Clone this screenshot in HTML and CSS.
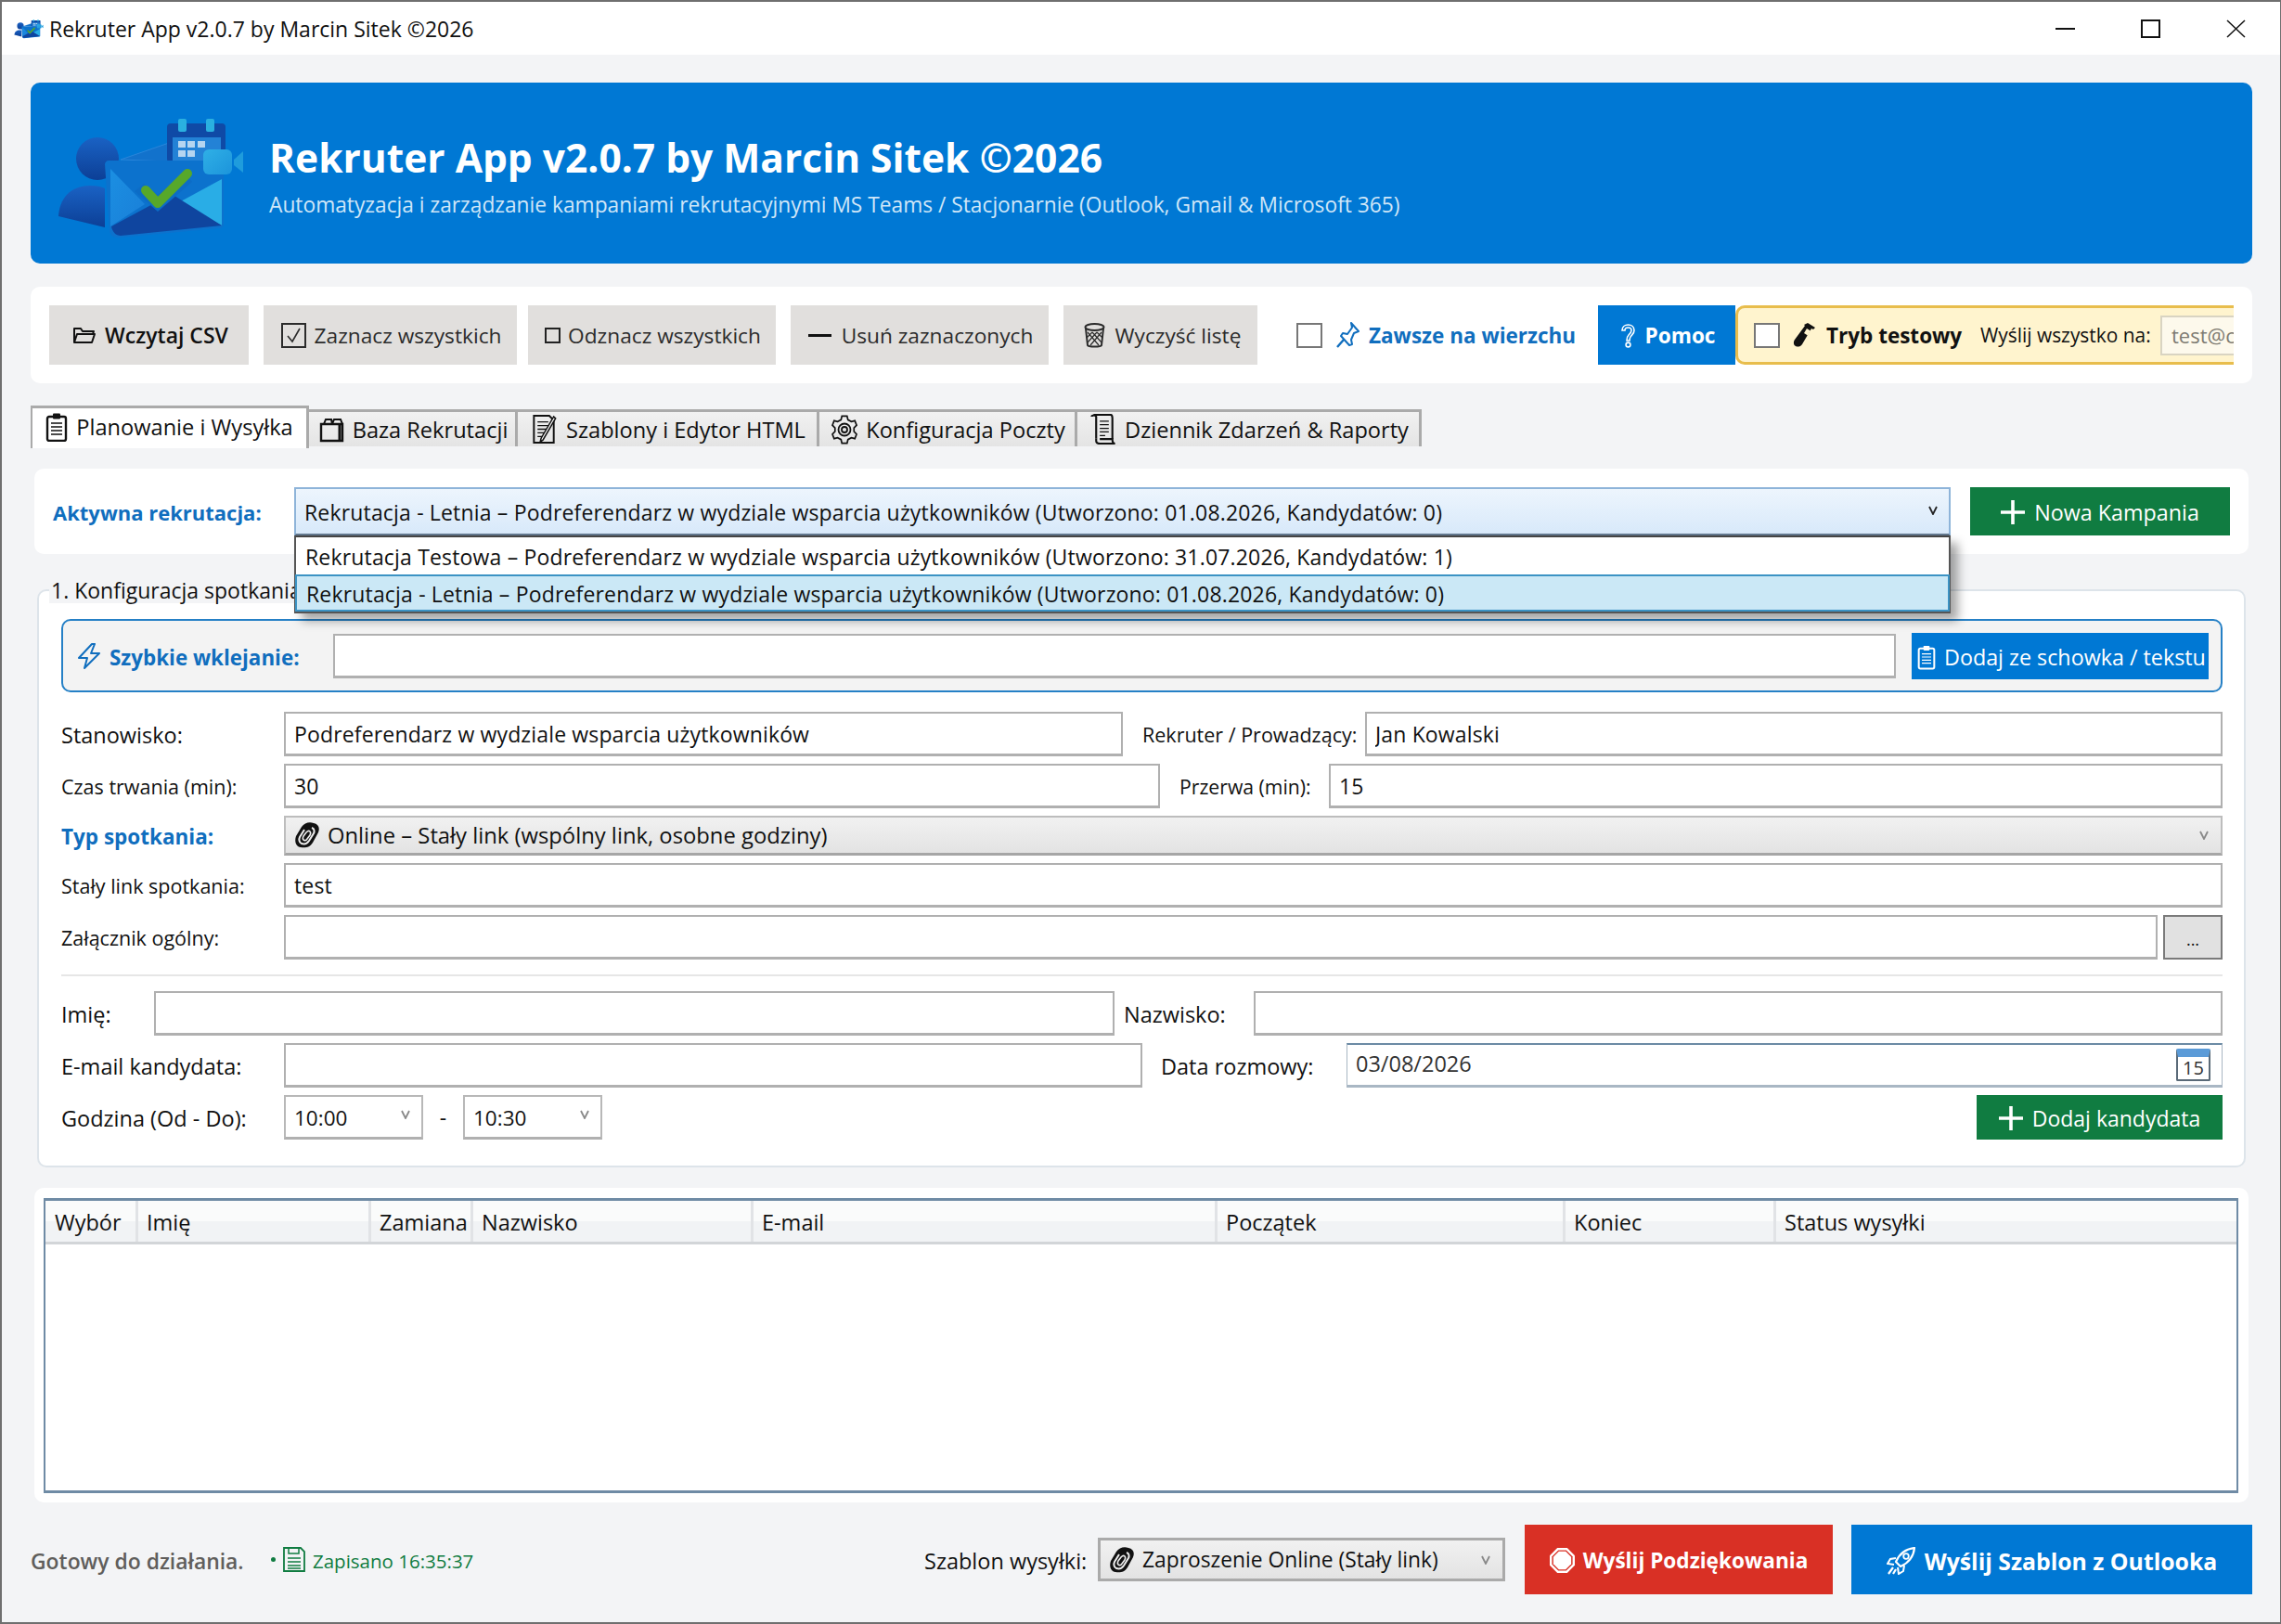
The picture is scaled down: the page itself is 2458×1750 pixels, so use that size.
FILE: index.html
```html
<!DOCTYPE html>
<html lang="pl">
<head>
    <meta charset="UTF-8">
    <title>Rekruter App v2.0.7 by Marcin Sitek ©2026</title>
    <link rel="stylesheet" href="styles.css">
</head>
<body>

<!-- zestaw ikon -->
<svg class="icon-defs" xmlns="http://www.w3.org/2000/svg">
    <defs>
        <linearGradient id="gPerson" x1="0" y1="0" x2="0" y2="1">
            <stop offset="0" stop-color="#1a62c4"/>
            <stop offset="1" stop-color="#0c3f96"/>
        </linearGradient>
        <linearGradient id="gFlap" x1="0" y1="0" x2="1" y2="1">
            <stop offset="0" stop-color="#1b8fe2"/>
            <stop offset="1" stop-color="#1a7fd8"/>
        </linearGradient>
        <linearGradient id="gCam" x1="0" y1="0" x2="1" y2="1">
            <stop offset="0" stop-color="#2fb0e6"/>
            <stop offset="1" stop-color="#1c94db"/>
        </linearGradient>
    </defs>
    <symbol id="i-logo" viewBox="20 15 205 132">
        <circle cx="65" cy="61" r="23" fill="url(#gPerson)"/>
        <path d="M23 123c1-18 12-33 34-33 7 0 12 1 16 3v42z" fill="url(#gPerson)"/>
        <path d="M90 62l52-18v20z" fill="#1272cc" stroke="#2a86da" stroke-width="1"/>
        <rect x="140" y="23" width="63" height="42" rx="4" fill="#0f4aa6"/>
        <rect x="146" y="38" width="52" height="26" fill="#2382d6"/>
        <rect x="152" y="18" width="9" height="14" rx="2" fill="#2ab0e0"/>
        <rect x="182" y="18" width="9" height="14" rx="2" fill="#2ab0e0"/>
        <g fill="#b5d5f0">
            <rect x="152" y="42" width="8" height="7"/>
            <rect x="162" y="42" width="8" height="7"/>
            <rect x="173" y="42" width="8" height="7"/>
            <rect x="152" y="52" width="8" height="7"/>
            <rect x="162" y="52" width="8" height="7"/>
        </g>
        <path d="M77 63h118c4 0 6 2 6 6v62c0 3-2 5-5 5L88 146c-5 0-9-2-10-7L73 67c0-2 2-4 4-4z" fill="#0c72cd"/>
        <path d="M79 72l37 38-37 24z" fill="url(#gFlap)"/>
        <path d="M199 83v50l-46-25z" fill="#29ade6"/>
        <path d="M80 134l50-27 18-6 51 32-109 11c-5 0-9-4-10-10z" fill="#0f459f"/>
        <path d="M105 96l25 22 37-32-8-10-29 24-15-12z" fill="#0c6cc6"/>
        <path d="M117 95l13 14 32-32" fill="none" stroke="#57a82a" stroke-width="10" stroke-linecap="round" stroke-linejoin="round"/>
        <rect x="179" y="51" width="31" height="27" rx="6" fill="url(#gCam)"/>
        <path d="M212 62l10-9v23l-10-8z" fill="#1f9cdc"/>
    </symbol>
    <symbol id="i-folder" viewBox="0 0 27 20">
        <path d="M3 18V3h7l2 3h12l-1 3M3 18h19l3-9H6z" fill="none" stroke="currentColor" stroke-width="2" stroke-linejoin="round"/>
    </symbol>
    <symbol id="i-check" viewBox="0 0 27 27">
        <rect x="1" y="1" width="25" height="25" fill="none" stroke="currentColor" stroke-width="2"/>
        <path d="M7 14l5 6 8-14" fill="none" stroke="currentColor" stroke-width="1.6"/>
    </symbol>
    <symbol id="i-trash" viewBox="0 0 27 27">
        <ellipse cx="13.5" cy="4.5" rx="10" ry="3.5" fill="none" stroke="currentColor" stroke-width="2"/>
        <path d="M4 6l2 18c1 2 14 2 15 0l2-18" fill="none" stroke="currentColor" stroke-width="2"/>
        <path d="M6 10l12 14M11 10l10 11M16 10l6 6M21 10L9 24M16 10L6 21M11 10l-6 6" stroke="currentColor" stroke-width="1.2" fill="none"/>
    </symbol>
    <symbol id="i-pin" viewBox="0 0 27 28">
        <path d="M17 1l8 9-5 2-3 7 1 5-3 1-9-10 2-3 5 1 5-7z" fill="none" stroke="currentColor" stroke-width="2" stroke-linejoin="round"/>
        <path d="M9 19l-7 8" stroke="currentColor" stroke-width="2.4" fill="none"/>
    </symbol>
    <symbol id="i-help" viewBox="0 0 17 27">
        <path d="M2 8c0-4 3-6 6.5-6S15 4 15 8s-3 5-4 7-1 3-1 4H7c0-3 0-4 2-6s3-3 3-5-1-3-3.500-3S5 6 5 8z" fill="none" stroke="currentColor" stroke-width="1.6"/>
        <circle cx="8.5" cy="23.5" r="2.4" fill="none" stroke="currentColor" stroke-width="1.6"/>
    </symbol>
    <symbol id="i-tube" viewBox="0 0 27 28">
        <path d="M16 1l8 5-2 2-2-1L10 24c-2 3-5 3-7 2s-3-4-1-7L13 4l-1-1z" fill="currentColor"/>
        <path d="M15 7l4 2.5-3 5-4-2.5z" fill="#fff4ce"/>
    </symbol>
    <symbol id="i-clip" viewBox="0 0 24 32">
        <rect x="2" y="5" width="20" height="26" rx="2" fill="none" stroke="currentColor" stroke-width="2.4"/>
        <rect x="8" y="1.5" width="8" height="6" rx="1" fill="currentColor"/>
        <path d="M6 12h12M6 16h12M6 20h12M6 24h12" stroke="currentColor" stroke-width="1.4"/>
    </symbol>
    <symbol id="i-box" viewBox="0 0 27 28">
        <path d="M2 8h23v18H2z" fill="none" stroke="currentColor" stroke-width="2.4"/>
        <path d="M5 8l2-5h6l1 5M14 8l2-5h7l2 5" fill="none" stroke="currentColor" stroke-width="2"/>
        <path d="M22 8v18" stroke="currentColor" stroke-width="3"/>
    </symbol>
    <symbol id="i-memo" viewBox="0 0 28 34">
        <path d="M2 2h17l5 5v25H2z" fill="none" stroke="currentColor" stroke-width="2"/>
        <path d="M6 9h12M6 13h12M6 17h10M6 21h8M6 25h6" stroke="currentColor" stroke-width="1.3"/>
        <path d="M26 5L12 29l-3 2 1-4L24 3z" fill="#fff" stroke="currentColor" stroke-width="1.6"/>
    </symbol>
    <symbol id="i-gear" viewBox="0 0 28 32">
        <path d="M11 1h6l1 4 4 2 4-1 2 5-3 3v4l3 3-2 5-4-1-4 2-1 4h-6l-1-4-4-2-4 1-2-5 3-3v-4L0 11l2-5 4 1 4-2z" fill="none" stroke="currentColor" stroke-width="1.8" transform="translate(1 .5) scale(.93 .97)"/>
        <circle cx="14" cy="16" r="6.5" fill="none" stroke="currentColor" stroke-width="1.8"/>
        <circle cx="14" cy="16" r="3" fill="none" stroke="currentColor" stroke-width="1.8"/>
    </symbol>
    <symbol id="i-scroll" viewBox="0 0 28 34">
        <path d="M1 3c0-2 5-2 5 0v2M3 1h19c2 0 2 2 2 4v23M6 4v23" fill="none" stroke="currentColor" stroke-width="2.2"/>
        <path d="M6 27v3c0 2 2 3 4 3h17c-2 0-3-2-3-5H10" fill="none" stroke="currentColor" stroke-width="2.2"/>
        <path d="M10 8h10M10 12h10M10 16h10M10 20h10M10 24h6" stroke="currentColor" stroke-width="1.3"/>
    </symbol>
    <symbol id="i-plus" viewBox="0 0 26 26">
        <path d="M13 0v26M0 13h26" stroke="currentColor" stroke-width="3.6" fill="none"/>
    </symbol>
    <symbol id="i-bolt" viewBox="0 0 26 28">
        <path d="M16 1L2 16h9l-3 11 16-16h-9l4-10z" fill="none" stroke="currentColor" stroke-width="2" stroke-linejoin="round"/>
    </symbol>
    <symbol id="i-link" viewBox="0 0 30 28">
        <path d="M22 1c5 1 7 5 5 10l-6 11c-3 5-8 6-13 5S1 21 3 15L9 5c3-4 8-6 13-4z" fill="currentColor"/>
        <path d="M20 6c3 1 3 4 2 6l-5 8c-2 3-5 4-8 3s-3-5-2-7l5-8" fill="none" stroke="#eee" stroke-width="2"/>
        <path d="M18 10c1 1 1 2 0 4l-3 4c-1 2-3 2-4 1s-1-2 0-4l3-4c1-1 3-2 4-1z" fill="none" stroke="#eee" stroke-width="1.6"/>
    </symbol>
    <symbol id="i-save" viewBox="0 0 24 27">
        <path d="M1 1h18l4 4v21H1z" fill="none" stroke="currentColor" stroke-width="1.8"/>
        <path d="M6 1v6h11V1M5 12h14M5 16h14M5 20h14M5 23h14" fill="none" stroke="currentColor" stroke-width="1.5"/>
    </symbol>
    <symbol id="i-stop" viewBox="0 0 28 28">
        <path d="M8.5 0h11L28 8.5v11L19.5 28h-11L0 19.5v-11z" fill="#fff"/>
        <path d="M9.5 2.5h9l7 7v9l-7 7h-9l-7-7v-9z" fill="#d93025"/>
        <path d="M10.2 4h7.6L24 10.2v7.6L17.8 24h-7.6L4 17.8v-7.6z" fill="#fff"/>
    </symbol>
    <symbol id="i-rocket" viewBox="0 0 32 30">
        <path d="M30 1C21 2 14 7 10 16l5 5c9-4 14-10 15-20z" fill="none" stroke="currentColor" stroke-width="2.2" stroke-linejoin="round"/>
        <circle cx="21" cy="10" r="2.8" fill="none" stroke="currentColor" stroke-width="1.8"/>
        <path d="M10 12l-6 1-3 5 7 1M19 20l-1 6-5 3-1-7" fill="none" stroke="currentColor" stroke-width="2"/>
        <path d="M7 22l-5 7M10 24l-3 5" stroke="currentColor" stroke-width="2.2"/>
    </symbol>
    <symbol id="i-chev" viewBox="0 0 12 10">
        <path d="M2 1l4 8 4-8" fill="none" stroke="currentColor" stroke-width="1.8"/>
    </symbol>
</svg>

<div class="app-window">

    <!-- pasek tytulu -->
    <div class="title-bar">
        <svg class="title-icon"><use href="#i-logo"/></svg>
        <span class="title-text">Rekruter App v2.0.7 by Marcin Sitek ©2026</span>
        <div class="win-controls">
            <span class="win-min"></span>
            <span class="win-max"></span>
            <svg class="win-close" viewBox="0 0 21 20"><path d="M1 1l19 18M20 1L1 19" stroke="#111" stroke-width="1.5" fill="none"/></svg>
        </div>
    </div>

    <div class="app-content">

        <!-- naglowek -->
        <header class="hero">
            <svg class="hero-logo"><use href="#i-logo"/></svg>
            <div class="hero-text">
                <h1 class="hero-title">Rekruter App v2.0.7 by Marcin Sitek ©2026</h1>
                <p class="hero-sub">Automatyzacja i zarządzanie kampaniami rekrutacyjnymi MS Teams / Stacjonarnie (Outlook, Gmail &amp; Microsoft 365)</p>
            </div>
        </header>

        <!-- pasek narzedzi -->
        <div class="toolbar panel">
            <button class="tool-btn tool-strong btn-csv"><svg class="ico ico-folder"><use href="#i-folder"/></svg>Wczytaj CSV</button>
            <button class="tool-btn btn-all"><svg class="ico ico-27"><use href="#i-check"/></svg>Zaznacz wszystkich</button>
            <button class="tool-btn btn-none"><span class="mini-square"></span>Odznacz wszystkich</button>
            <button class="tool-btn btn-del"><span class="minus-bar"></span>Usuń zaznaczonych</button>
            <button class="tool-btn btn-clear"><svg class="ico ico-27"><use href="#i-trash"/></svg>Wyczyść listę</button>

            <span class="check-box top-check"></span>
            <svg class="ico ico-pin"><use href="#i-pin"/></svg>
            <span class="always-top">Zawsze na wierzchu</span>

            <button class="help-btn"><svg class="ico ico-help"><use href="#i-help"/></svg>Pomoc</button>

            <div class="test-mode">
                <span class="check-box"></span>
                <svg class="ico ico-tube"><use href="#i-tube"/></svg>
                <span class="test-label">Tryb testowy</span>
                <span class="test-send">Wyślij wszystko na:</span>
                <span class="test-input">test@company.pl</span>
            </div>
        </div>

        <!-- zakladki -->
        <nav class="tabs">
            <div class="tab tab-active tab-plan"><svg class="ico ico-clip"><use href="#i-clip"/></svg>Planowanie i Wysyłka</div>
            <div class="tab tab-base"><svg class="ico ico-box"><use href="#i-box"/></svg>Baza Rekrutacji</div>
            <div class="tab tab-tpl"><svg class="ico ico-memo"><use href="#i-memo"/></svg>Szablony i Edytor HTML</div>
            <div class="tab tab-conf"><svg class="ico ico-gear"><use href="#i-gear"/></svg>Konfiguracja Poczty</div>
            <div class="tab tab-log"><svg class="ico ico-scroll"><use href="#i-scroll"/></svg>Dziennik Zdarzeń &amp; Raporty</div>
        </nav>

        <!-- aktywna rekrutacja -->
        <div class="campaign panel">
            <span class="campaign-label">Aktywna rekrutacja:</span>
            <div class="campaign-combo">
                <span>Rekrutacja - Letnia – Podreferendarz w wydziale wsparcia użytkowników (Utworzono: 01.08.2026, Kandydatów: 0)</span>
                <svg class="chev chev-dark"><use href="#i-chev"/></svg>
                <ul class="campaign-list">
                    <li>Rekrutacja Testowa – Podreferendarz w wydziale wsparcia użytkowników (Utworzono: 31.07.2026, Kandydatów: 1)</li>
                    <li class="is-selected">Rekrutacja - Letnia – Podreferendarz w wydziale wsparcia użytkowników (Utworzono: 01.08.2026, Kandydatów: 0)</li>
                </ul>
            </div>
            <button class="green-btn btn-campaign"><svg class="ico ico-plus"><use href="#i-plus"/></svg>Nowa Kampania</button>
        </div>

        <!-- konfiguracja spotkania -->
        <section class="config-group">
            <span class="group-title">1. Konfiguracja spotkania</span>

            <div class="quick-paste">
                <svg class="ico ico-bolt"><use href="#i-bolt"/></svg>
                <span class="quick-label">Szybkie wklejanie:</span>
                <input class="field quick-input" type="text">
                <button class="quick-btn"><svg class="ico ico-quick"><use href="#i-clip"/></svg>Dodaj ze schowka / tekstu</button>
            </div>

            <div class="form-row">
                <label class="lbl lbl-main">Stanowisko:</label>
                <input class="field inp-position" type="text" value="Podreferendarz w wydziale wsparcia użytkowników">
                <label class="lbl lbl-small lbl-recruiter">Rekruter / Prowadzący:</label>
                <input class="field grow" type="text" value="Jan Kowalski">
            </div>
            <div class="form-row">
                <label class="lbl lbl-small lbl-main">Czas trwania (min):</label>
                <input class="field inp-duration" type="text" value="30">
                <label class="lbl lbl-break">Przerwa (min):</label>
                <input class="field grow" type="text" value="15">
            </div>
            <div class="form-row row-type">
                <label class="lbl lbl-main lbl-blue">Typ spotkania:</label>
                <div class="combo grow">
                    <svg class="ico ico-link"><use href="#i-link"/></svg>
                    <span>Online – Stały link (wspólny link, osobne godziny)</span>
                    <svg class="chev"><use href="#i-chev"/></svg>
                </div>
            </div>
            <div class="form-row">
                <label class="lbl lbl-small lbl-main">Stały link spotkania:</label>
                <input class="field grow" type="text" value="test">
            </div>
            <div class="form-row">
                <label class="lbl lbl-small lbl-main">Załącznik ogólny:</label>
                <input class="field grow" type="text">
                <button class="browse-btn">...</button>
            </div>

            <div class="divider"></div>

            <div class="form-row">
                <label class="lbl lbl-first">Imię:</label>
                <input class="field inp-first" type="text">
                <label class="lbl lbl-last">Nazwisko:</label>
                <input class="field grow" type="text">
            </div>
            <div class="form-row">
                <label class="lbl lbl-main">E-mail kandydata:</label>
                <input class="field inp-email" type="text">
                <label class="lbl lbl-date">Data rozmowy:</label>
                <div class="date-field grow">
                    <span>03/08/2026</span>
                    <div class="cal-icon"><span>15</span></div>
                </div>
            </div>
            <div class="form-row row-last">
                <label class="lbl lbl-main">Godzina (Od - Do):</label>
                <div class="time-combo"><span>10:00</span><svg class="chev"><use href="#i-chev"/></svg></div>
                <span class="time-dash">-</span>
                <div class="time-combo"><span>10:30</span><svg class="chev"><use href="#i-chev"/></svg></div>
                <button class="green-btn btn-add"><svg class="ico ico-plus"><use href="#i-plus"/></svg>Dodaj kandydata</button>
            </div>
        </section>

        <!-- tabela kandydatow -->
        <div class="table-panel panel">
            <div class="grid-table">
                <div class="grid-head">
                    <div class="th">Wybór</div>
                    <div class="th">Imię</div>
                    <div class="th">Zamiana</div>
                    <div class="th">Nazwisko</div>
                    <div class="th">E-mail</div>
                    <div class="th">Początek</div>
                    <div class="th">Koniec</div>
                    <div class="th">Status wysyłki</div>
                </div>
            </div>
        </div>

        <!-- stopka -->
        <footer class="bottom-bar">
            <span class="status-text">Gotowy do działania.</span>
            <span class="status-dot"></span>
            <svg class="ico ico-save"><use href="#i-save"/></svg>
            <span class="status-saved">Zapisano 16:35:37</span>
            <span class="bottom-label">Szablon wysyłki:</span>
            <div class="combo send-combo">
                <svg class="ico ico-link"><use href="#i-link"/></svg>
                <span>Zaproszenie Online (Stały link)</span>
                <svg class="chev"><use href="#i-chev"/></svg>
            </div>
            <button class="send-btn send-red"><svg class="ico ico-27"><use href="#i-stop"/></svg>Wyślij Podziękowania</button>
            <button class="send-btn send-blue"><svg class="ico ico-rocket"><use href="#i-rocket"/></svg>Wyślij Szablon z Outlooka</button>
        </footer>
    </div>
</div>

</body>
</html>
```

FILE: styles.css
```css
* {
    margin: 0;
    padding: 0;
    box-sizing: border-box;
}

body {
    font-family: "Open Sans", "Noto Sans", "Liberation Sans", sans-serif;
    font-size: 23px;
    color: #111;
    background: #f3f4f6;
    overflow: hidden;
}

button,
input {
    font: inherit;
    color: inherit;
    border-radius: 0;
}

button {
    border: none;
}

.icon-defs {
    position: absolute;
    width: 0;
    height: 0;
}

.ico {
    flex: none;
    display: block;
}

.ico-27 { width: 27px; height: 27px; }

/* okno */
.app-window {
    width: 2458px;
    height: 1750px;
    border: 2px solid #6f6f6f;
    border-right-width: 1px;
    display: flex;
    flex-direction: column;
    background: #f3f4f6;
}

.title-bar {
    height: 57px;
    flex: none;
    background: #fff;
    display: flex;
    align-items: center;
    padding: 0 37px 0 13px;
}

.title-icon {
    width: 32px;
    height: 22px;
    margin-right: 6px;
}

.title-text {
    font-size: 23px;
}

.win-controls {
    margin-left: auto;
    display: flex;
    align-items: center;
    gap: 71px;
}

.win-min {
    width: 21px;
    height: 2px;
    background: #111;
}

.win-max {
    width: 21px;
    height: 20px;
    border: 2px solid #111;
}

.win-close {
    width: 21px;
    height: 20px;
}

.app-content {
    flex: 1;
    padding: 30px 30px 0 31px;
}

.panel {
    background: #fff;
    border-radius: 10px;
}

/* naglowek */
.hero {
    height: 195px;
    background: #0078d4;
    border-radius: 10px;
    display: flex;
    align-items: center;
    padding-left: 27px;
    color: #fff;
}

.hero-logo {
    width: 205px;
    height: 132px;
    margin: 9px 25px 0 0;
}

.hero-text {
    margin-top: 6px;
    white-space: nowrap;
}

.hero-title {
    font-size: 42.5px;
    font-weight: 700;
    line-height: 52px;
}

.hero-sub {
    font-size: 22.75px;
    line-height: 30px;
    margin-top: 10px;
    color: #cfe6f8;
}

/* pasek narzedzi */
.toolbar {
    height: 104px;
    margin-top: 25px;
    padding: 20px;
    display: flex;
    align-items: center;
}

.tool-btn {
    height: 64px;
    flex: none;
    background: #e1dfdd;
    color: #2b2b2b;
    display: flex;
    align-items: center;
    justify-content: center;
    gap: 9px;
    margin-right: 16px;
    padding-left: 2px;
    white-space: nowrap;
    font-size: 22.7px;
}

.tool-strong {
    font-weight: 600;
    font-size: 23px;
    color: #111;
}

.btn-csv { width: 215px; }
.btn-all { width: 273px; margin-right: 12px; }
.btn-none { width: 267px; gap: 8px; }
.btn-del { width: 278px; gap: 11px; }
.btn-clear { width: 209px; margin-right: 42px; }

.ico-folder { width: 27px; height: 20px; }

.mini-square {
    width: 17px;
    height: 17px;
    border: 2px solid #222;
    flex: none;
}

.minus-bar {
    width: 25px;
    height: 3px;
    background: #111;
    flex: none;
}

.check-box {
    width: 28px;
    height: 27px;
    flex: none;
    background: #fff;
    border: 2px solid #777;
}

.ico-pin {
    width: 27px;
    height: 28px;
    color: #106ebe;
    margin: 0 9px 0 14px;
}

.always-top {
    color: #106ebe;
    font-weight: 700;
    font-size: 22.5px;
    white-space: nowrap;
    width: 247px;
}

.help-btn {
    width: 148px;
    height: 64px;
    flex: none;
    background: #0078d4;
    color: #fff;
    font-weight: 700;
    font-size: 22.6px;
    display: flex;
    align-items: center;
    justify-content: center;
    gap: 10px;
    padding-left: 2px;
}

.ico-help { width: 17px; height: 27px; }

.test-mode {
    flex: 1;
    min-width: 0;
    height: 64px;
    background: #fff4ce;
    border: 3px solid #e8bd4c;
    border-right: none;
    border-radius: 10px 0 0 10px;
    display: flex;
    align-items: center;
    padding-left: 17px;
    overflow: hidden;
    white-space: nowrap;
}

.ico-tube {
    width: 27px;
    height: 28px;
    margin: 0 9px 0 14px;
}

.test-label {
    flex: none;
    font-weight: 700;
    font-size: 22.5px;
    width: 166px;
}

.test-send {
    flex: none;
    font-size: 20.9px;
    width: 194px;
}

.test-input {
    flex: none;
    width: 180px;
    height: 43px;
    line-height: 38px;
    padding-left: 10px;
    background: #fdf9ec;
    border: 2px solid #d9d4c2;
    color: #7d7b72;
    font-size: 22px;
}

/* zakladki */
.tabs {
    display: flex;
    align-items: flex-start;
    height: 46px;
    margin-top: 24px;
}

.tab {
    height: 40px;
    margin-top: 4px;
    flex: none;
    display: flex;
    align-items: center;
    justify-content: center;
    gap: 9px;
    padding-left: 3px;
    background: linear-gradient(#f1f1f1, #e4e4e4);
    border: 3px solid #aaa;
    border-bottom: none;
    border-left: none;
    white-space: nowrap;
    font-size: 23.6px;
}

.tab-active {
    height: 46px;
    margin-top: 0;
    background: #fff;
    border-left: 2px solid #aaa;
    padding-left: 0;
    padding-bottom: 4px;
}

.tab-plan { width: 300px; }
.tab-base { width: 225px; }
.tab-tpl { width: 325px; }
.tab-conf { width: 278px; }
.tab-log { width: 371px; }

.ico-clip { width: 24px; height: 32px; }
.ico-box { width: 27px; height: 28px; }
.ico-memo { width: 28px; height: 33px; }
.ico-gear { width: 28px; height: 32px; }
.ico-scroll { width: 28px; height: 33px; }

/* aktywna rekrutacja */
.campaign {
    height: 92px;
    margin: 22px 4px 0;
    padding: 20px;
    display: flex;
    align-items: flex-start;
}

.campaign-label {
    width: 260px;
    line-height: 54px;
    color: #106ebe;
    font-weight: 700;
    font-size: 22px;
    white-space: nowrap;
}

.campaign-combo {
    position: relative;
    width: 1785px;
    height: 53px;
    display: flex;
    align-items: center;
    padding: 2px 0 0 9px;
    background: linear-gradient(#edf5fd, #d8e9fa);
    border: 2px solid #8eb4d9;
    border-bottom: 3px solid #64798f;
    white-space: nowrap;
    letter-spacing: 0.17px;
}

.chev {
    width: 12px;
    height: 10px;
    margin-left: auto;
    color: #888;
    flex: none;
}

.campaign-combo .chev {
    margin: -4px 11px 0 auto;
}

.chev-dark {
    color: #222;
}

.campaign-list {
    position: absolute;
    left: -2px;
    top: 50px;
    width: 1785px;
    height: 84px;
    list-style: none;
    background: #fff;
    border: 2px solid #555;
    border-top-color: #444;
    box-shadow: 8px 8px 10px rgba(0, 0, 0, 0.35);
    z-index: 5;
}

.campaign-list li {
    height: 40px;
    line-height: 42px;
    padding-left: 10px;
}

.campaign-list .is-selected {
    line-height: 38px;
    background: #cbe8f6;
    border: 2px solid #3c93c4;
    margin-left: -1px;
    margin-right: -1px;
}

.green-btn {
    background: #107c41;
    color: #fff;
    display: flex;
    align-items: center;
    justify-content: center;
    gap: 10px;
    white-space: nowrap;
    font-weight: 500;
}

.btn-campaign {
    width: 280px;
    height: 52px;
    margin-left: 21px;
    padding-top: 1px;
    font-size: 23.3px;
}

.ico-plus { width: 26px; height: 26px; }

/* konfiguracja spotkania */
.config-group {
    position: relative;
    height: 623px;
    margin: 38px 7px 0;
    padding: 30px 23px 0 24px;
    background: #fff;
    border: 2px solid #dde4ea;
    border-radius: 10px;
}

.group-title {
    position: absolute;
    left: 11px;
    top: -15px;
    padding: 0 2px;
    line-height: 28px;
    background: #f3f4f6;
    white-space: nowrap;
}

.quick-paste {
    height: 79px;
    display: flex;
    align-items: center;
    padding: 0 13px 0 15px;
    margin-bottom: 21px;
    background: #f3f3f3;
    border: 2px solid #2580c6;
    border-radius: 10px;
}

.ico-bolt {
    width: 26px;
    height: 28px;
    color: #106ebe;
    margin-right: 9px;
}

.quick-label {
    width: 241px;
    padding-top: 3px;
    color: #106ebe;
    font-weight: 700;
    font-size: 22.4px;
    white-space: nowrap;
}

.field {
    height: 48px;
    padding: 0 9px;
    background: #fff;
    border: 2px solid #b0b0b0;
    border-bottom-width: 3px;
    outline: none;
    min-width: 0;
    letter-spacing: 0.15px;
}

.quick-input {
    flex: 1;
}

.quick-btn {
    width: 320px;
    height: 50px;
    flex: none;
    margin-left: 17px;
    background: #0078d4;
    color: #fff;
    display: flex;
    align-items: center;
    padding: 2px 0 0 6px;
    gap: 9px;
    white-space: nowrap;
    overflow: hidden;
    font-weight: 500;
    font-size: 23.3px;
}

.ico-quick {
    width: 20px;
    height: 28px;
}

.form-row {
    display: flex;
    align-items: center;
    height: 48px;
    margin-bottom: 8px;
}

.row-type {
    height: 43px;
}

.row-last {
    margin-bottom: 0;
}

.grow {
    flex: 1;
}

.lbl {
    flex: none;
    padding-top: 1px;
    white-space: nowrap;
    font-size: 23.5px;
}

.lbl-small {
    font-size: 21.5px;
}

.lbl-main { width: 240px; }
.lbl-blue { color: #106ebe; font-weight: 700; font-size: 22.5px; }
.inp-position { width: 904px; }
.lbl-recruiter { width: 240px; margin-left: 21px; }
.inp-duration { width: 944px; }
.lbl-break { width: 161px; margin-left: 21px; font-size: 21.2px; }
.lbl-first { width: 100px; }
.inp-first { width: 1035px; }
.lbl-last { width: 140px; margin-left: 10px; }
.inp-email { width: 925px; }
.lbl-date { width: 200px; margin-left: 20px; }

.combo {
    height: 100%;
    display: flex;
    align-items: center;
    padding: 0 12px 0 8px;
    gap: 7px;
    background: linear-gradient(#f1f1f1, #e3e3e3);
    border: 2px solid #bdbdbd;
    border-bottom: 3px solid #a6a6a6;
    white-space: nowrap;
    font-size: 23.8px;
}

.ico-link {
    width: 30px;
    height: 28px;
}

.browse-btn {
    width: 64px;
    height: 48px;
    flex: none;
    margin-left: 6px;
    background: #e1e1e1;
    border: 2px solid #7a7a7a;
    line-height: 44px;
    padding-top: 2px;
    font-size: 18px;
}

.divider {
    height: 2px;
    margin: 16px 0;
    background: #e6e6e6;
}

.date-field {
    height: 48px;
    display: flex;
    align-items: center;
    justify-content: space-between;
    padding: 0 12px 4px 9px;
    background: #fff;
    border: 1px solid #a9b7c4;
    border-top: 2px solid #6b8aa5;
    border-bottom: 3px solid #a9b7c4;
    color: #333;
    font-size: 23.5px;
}

.cal-icon {
    width: 37px;
    height: 35px;
    margin-top: 4px;
    border: 2px solid #5a6a78;
    border-top: 9px solid #5b9bd8;
    border-radius: 2px;
    background: #fff;
    font-size: 20px;
    line-height: 24px;
    text-align: center;
}

.time-combo {
    width: 150px;
    height: 48px;
    flex: none;
    display: flex;
    align-items: center;
    padding: 1px 11px 0 9px;
    border: 2px solid #b8b8b8;
    border-bottom: 3px solid #b0b0b0;
    background: #fff;
    font-size: 22.5px;
}

.time-combo .chev {
    margin-top: -6px;
}

.time-dash {
    width: 43px;
    text-align: center;
    flex: none;
}

.btn-add {
    width: 265px;
    height: 48px;
    margin-left: auto;
    padding-top: 1px;
}

/* tabela */
.table-panel {
    height: 339px;
    margin: 22px 4px 0;
    padding: 11px 11px 10px 10px;
}

.grid-table {
    height: 318px;
    background: #fff;
    border: 2px solid #6f8ba5;
    border-top-width: 3px;
    border-bottom-width: 3px;
}

.grid-head {
    height: 47px;
    display: grid;
    grid-template-columns: 100px 251px 110px 302px 500px 375px 227px 1fr;
    background: linear-gradient(#fafbfb 50%, #f1f3f5 50%);
    border-bottom: 3px solid #d2d5d8;
}

.th {
    line-height: 46px;
    padding-left: 9px;
    border-right: 3px solid #e1e3e6;
    overflow: hidden;
    white-space: nowrap;
    font-size: 23.5px;
}

.th:first-child {
    padding-left: 10px;
}

.th:last-child {
    border-right: none;
}

/* stopka */
.bottom-bar {
    height: 75px;
    margin-top: 24px;
    display: flex;
    align-items: center;
    white-space: nowrap;
}

.status-text {
    padding-top: 3px;
    color: #605e5c;
    font-weight: 600;
    font-size: 22.9px;
    width: 259px;
}

.status-dot {
    width: 5px;
    height: 5px;
    border-radius: 50%;
    background: #107c41;
    margin-right: 8px;
}

.ico-save {
    width: 24px;
    height: 27px;
    color: #107c41;
    margin-right: 8px;
}

.status-saved {
    padding-top: 2px;
    color: #107c41;
    font-size: 20.5px;
}

.bottom-label {
    margin-left: auto;
    padding-top: 2px;
    font-weight: 500;
    font-size: 23.5px;
    width: 187px;
}

.send-combo {
    flex: none;
    width: 439px;
    height: 47px;
    padding-right: 12px;
    border-width: 3px;
    border-color: #aaa;
    font-size: 22.8px;
}

.send-btn {
    height: 75px;
    flex: none;
    padding-top: 2px;
    color: #fff;
    font-weight: 700;
    display: flex;
    align-items: center;
    justify-content: center;
    gap: 9px;
}

.send-red {
    width: 332px;
    margin-left: 21px;
    background: #d93025;
    font-size: 22.6px;
}

.send-blue {
    width: 432px;
    margin-left: 20px;
    background: #0078d4;
    font-size: 24.8px;
}

.ico-rocket {
    width: 32px;
    height: 30px;
}
```
